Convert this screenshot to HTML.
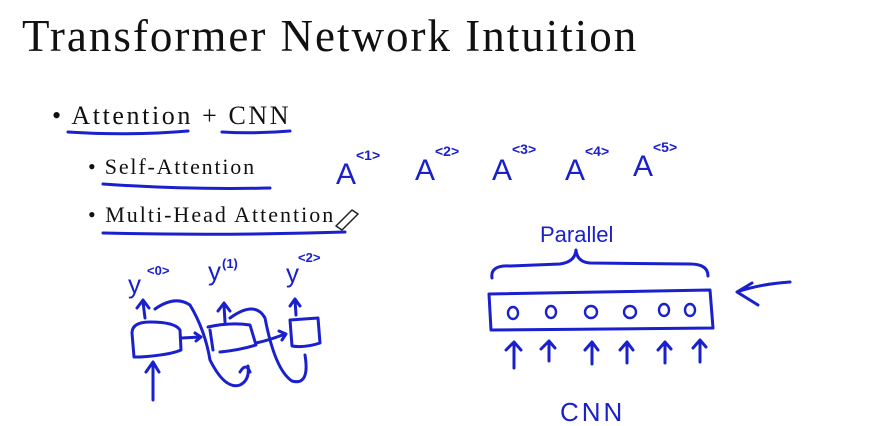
<!DOCTYPE html>
<html><head><meta charset="utf-8"><style>
html,body{margin:0;padding:0;background:#fff;width:882px;height:426px;overflow:hidden;position:relative;font-family:"Liberation Serif",serif;color:#111}
.t{position:absolute;white-space:nowrap}
</style></head><body>
<div class="t" style="left:22px;top:10px;font-size:45px;letter-spacing:2px">Transformer Network Intuition</div>
<div class="t" style="left:52px;top:101px;font-size:26px;letter-spacing:2.6px">• Attention + CNN</div>
<div class="t" style="left:88px;top:154px;font-size:22px;letter-spacing:1.8px">• Self-Attention</div>
<div class="t" style="left:88px;top:202px;font-size:22px;letter-spacing:2px">• Multi-Head Attention</div>
<svg width="882" height="426" style="position:absolute;left:0;top:0" fill="none" stroke="#1a20cc" stroke-width="3" stroke-linecap="round" stroke-linejoin="round">
<path d="M68 132 Q130 136 188 131"/><path d="M222 132 Q255 134 290 131"/>
<path d="M103 184 Q190 190 270 188"/><path d="M103 233 Q220 236 345 232"/>
<g stroke="#222" stroke-width="1.5"><path d="M336 226 L352 210 L358 214 L342 230 Z"/></g>
<g font-family="Liberation Sans,sans-serif" font-size="30" fill="#1a20cc" stroke="none">
<text x="336" y="184">A</text><text x="415" y="180">A</text><text x="492" y="180">A</text><text x="565" y="180">A</text><text x="633" y="176">A</text>
</g>
<g font-family="Liberation Sans,sans-serif" font-size="14" font-weight="bold" fill="#1a20cc" stroke="none">
<text x="356" y="160">&lt;1&gt;</text><text x="435" y="156">&lt;2&gt;</text><text x="512" y="154">&lt;3&gt;</text><text x="585" y="156">&lt;4&gt;</text><text x="653" y="152">&lt;5&gt;</text>
</g>
<text x="540" y="242" font-family="Liberation Sans,sans-serif" font-size="22" fill="#1a20cc" stroke="none">Parallel</text>
<path d="M492 278 Q490 265 510 266 L560 264 Q575 262 576 250 Q577 262 590 263 L690 264 Q708 264 708 276"/>
<path d="M489 294 L710 290 L713 328 L491 330 Z"/>
<g stroke-width="2.4"><ellipse cx="513" cy="313" rx="5" ry="6"/><ellipse cx="551" cy="312" rx="5" ry="6"/><ellipse cx="591" cy="312" rx="6" ry="6"/><ellipse cx="630" cy="312" rx="6" ry="6"/><ellipse cx="664" cy="310" rx="5" ry="6"/><ellipse cx="690" cy="310" rx="5" ry="6"/></g>
<path d="M790 282 Q760 284 737 292 L758 305 M737 292 L752 283"/>
<g><path d="M514 368 V343 M506 350 L514 342 L521 350"/><path d="M549 361 V341 M541 349 L549 341 L555 348"/><path d="M592 364 V342 M585 350 L592 342 L598 350"/><path d="M627 363 V342 M620 350 L627 342 L633 350"/><path d="M665 363 V342 M658 350 L665 342 L671 349"/><path d="M700 362 V341 M693 348 L700 340 L706 347"/></g>
<text x="560" y="421" font-family="Liberation Sans,sans-serif" font-size="26" fill="#1a20cc" stroke="none" letter-spacing="3">CNN</text>
<g font-family="Liberation Sans,sans-serif" fill="#1a20cc" stroke="none"><text x="128" y="293" font-size="26">y</text><text x="147" y="275" font-size="13" font-weight="bold">&lt;0&gt;</text><text x="208" y="280" font-size="26">y</text><text x="222" y="268" font-size="13" font-weight="bold">(1)</text><text x="286" y="282" font-size="26">y</text><text x="298" y="262" font-size="13" font-weight="bold">&lt;2&gt;</text></g>
<path d="M132 333 Q132 322 150 322 Q175 322 180 330 L181 350 Q170 355 140 357 L134 357 Z"/>
<path d="M208 327 Q230 322 250 325 L256 345 Q240 350 220 352"/><path d="M210 330 L213 350"/>
<path d="M290 320 L318 318 L320 343 Q305 348 292 346 Z"/>
<path d="M145 318 L143 302 M137 308 L143 300 L149 308"/><path d="M225 322 L224 305 M218 311 L224 303 L230 311"/><path d="M296 315 L295 300 M290 306 L295 299 L300 306"/>
<path d="M153 400 V363 M146 372 L153 362 L159 372"/>
<path d="M182 338 L200 337 M195 333 L201 337 L196 341"/><path d="M256 343 Q270 340 285 334 M279 331 L286 334 L282 340"/>
<path d="M155 309 Q175 295 190 305 Q205 330 210 360 Q225 390 240 385 Q250 380 248 366"/>
<path d="M230 318 Q255 300 265 318 Q275 370 292 381 Q310 386 305 355"/>
<path d="M240 372 Q246 362 250 372"/>
</svg>
</body></html>
